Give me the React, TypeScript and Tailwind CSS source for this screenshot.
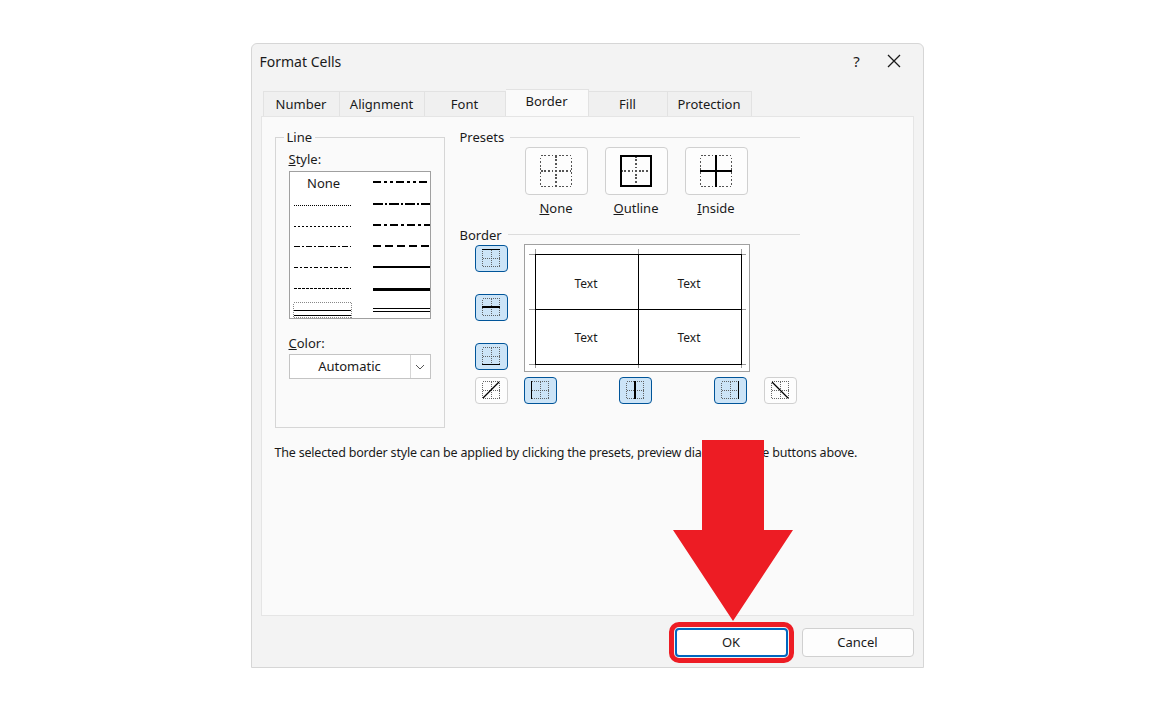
import React from 'react';

const font = { fontFamily: '"Noto Sans", "Open Sans", sans-serif' };

type IconProps = { top?: boolean; mid?: boolean; bottom?: boolean; left?: boolean; center?: boolean; right?: boolean; diagUp?: boolean; diagDown?: boolean; size?: number; w?: number };

// small border glyph: dotted grid with the solid edges picked by props
const BorderGlyph: React.FC<IconProps> = ({ top, mid, bottom, left, center, right, diagUp, diagDown, size = 20, w = 1.5 }) => (
    <svg width={size} height={size} viewBox="0 0 20 20" shapeRendering="crispEdges">
        <rect x="1.5" y="1.5" width="17" height="17" fill="none" stroke="#555" strokeDasharray="1 1" strokeWidth={w * 0.6} />
        <line x1="10" y1="1.5" x2="10" y2="18.5" stroke="#555" strokeDasharray="1 1" strokeWidth={w * 0.6} />
        <line x1="1.5" y1="10" x2="18.5" y2="10" stroke="#555" strokeDasharray="1 1" strokeWidth={w * 0.6} />
        {top && <line x1="1" y1="1.5" x2="19" y2="1.5" stroke="#000" strokeWidth={w} />}
        {mid && <line x1="1" y1="10" x2="19" y2="10" stroke="#000" strokeWidth={w} />}
        {bottom && <line x1="1" y1="18.5" x2="19" y2="18.5" stroke="#000" strokeWidth={w} />}
        {left && <line x1="1.5" y1="1" x2="1.5" y2="19" stroke="#000" strokeWidth={w} />}
        {center && <line x1="10" y1="1" x2="10" y2="19" stroke="#000" strokeWidth={w} />}
        {right && <line x1="18.5" y1="1" x2="18.5" y2="19" stroke="#000" strokeWidth={w} />}
        {diagUp && <line x1="2" y1="18" x2="18" y2="2" stroke="#000" strokeWidth="1.2" shapeRendering="auto" />}
        {diagDown && <line x1="2" y1="2" x2="18" y2="18" stroke="#000" strokeWidth="1.2" shapeRendering="auto" />}
    </svg>
);

const SmallBtn: React.FC<{ on?: boolean; children: React.ReactNode }> = ({ on, children }) => (
    <div className={`w-[33px] h-[27px] rounded-[4px] border flex items-center justify-center ${on ? 'bg-[#cce4f7] border-[#005499]' : 'bg-[#fdfdfd] border-[#d0d0d0]'}`}>
        {children}
    </div>
);

const PresetBtn: React.FC<{ u: string; rest: string; children: React.ReactNode }> = ({ u, rest, children }) => (
    <div className="flex flex-col items-center w-[63px]">
        <div className="w-[63px] h-[48px] rounded-[4px] border border-[#d0d0d0] bg-[#fdfdfd] flex items-center justify-center">{children}</div>
        <div className="mt-[4px] text-[13px] text-[#1a1a1a]"><span className="underline">{u}</span>{rest}</div>
    </div>
);

const Header: React.FC<{ label: string }> = ({ label }) => (
    <div className="flex items-center gap-[6px] text-[13px] text-[#1a1a1a] leading-[18px]">
        <span>{label}</span>
        <div className="flex-1 h-px bg-[#dcdcdc]" />
    </div>
);

const StyleList = () => (
    <svg width="140" height="146" viewBox="0 0 140 146" shapeRendering="crispEdges">
        <text x="16" y="15" fontSize="13" fill="#1a1a1a" style={font}>None</text>
        <line x1="3" y1="32" x2="60" y2="32" stroke="#000" strokeDasharray="1 1" />
        <line x1="3" y1="53" x2="60" y2="53" stroke="#000" strokeDasharray="2 2" />
        <line x1="3" y1="73" x2="60" y2="73" stroke="#000" strokeDasharray="6 2 2 2" />
        <line x1="3" y1="94" x2="60" y2="94" stroke="#000" strokeDasharray="4 2 2 2" />
        <line x1="3" y1="115" x2="60" y2="115" stroke="#000" strokeDasharray="3 1" />
        <rect x="2.5" y="129.5" width="58" height="15" fill="none" stroke="#888" strokeDasharray="1 1" />
        <line x1="3" y1="137" x2="60" y2="137" stroke="#000" />
        <line x1="3" y1="142" x2="60" y2="142" stroke="#000" />
        <line x1="82" y1="9" x2="139" y2="9" stroke="#000" strokeWidth="2" strokeDasharray="8 3 3 3 3 3" />
        <line x1="82" y1="31" x2="139" y2="31" stroke="#000" strokeWidth="2" strokeDasharray="10 2 2 2" />
        <line x1="82" y1="52" x2="139" y2="52" stroke="#000" strokeWidth="2" strokeDasharray="8 3 3 3" />
        <line x1="82" y1="73" x2="139" y2="73" stroke="#000" strokeWidth="2" strokeDasharray="8 4" />
        <line x1="82" y1="94" x2="139" y2="94" stroke="#000" strokeWidth="2" />
        <line x1="82" y1="116" x2="139" y2="116" stroke="#000" strokeWidth="3" />
        <line x1="82" y1="135" x2="139" y2="135" stroke="#000" />
        <line x1="82" y1="138" x2="139" y2="138" stroke="#000" />
    </svg>
);

const Preview = () => (
    <svg width="225" height="127" viewBox="0 0 225 127" shapeRendering="crispEdges" style={font}>
        <g stroke="#999">
            <line x1="10" y1="4" x2="10" y2="13" /><line x1="216" y1="4" x2="216" y2="13" /><line x1="113" y1="4" x2="113" y2="13" />
            <line x1="10" y1="114" x2="10" y2="123" /><line x1="216" y1="114" x2="216" y2="123" /><line x1="113" y1="114" x2="113" y2="123" />
            <line x1="4" y1="9" x2="13" y2="9" /><line x1="212" y1="9" x2="221" y2="9" />
            <line x1="4" y1="64" x2="13" y2="64" /><line x1="212" y1="64" x2="221" y2="64" />
            <line x1="4" y1="119" x2="13" y2="119" /><line x1="212" y1="119" x2="221" y2="119" />
        </g>
        <rect x="10.5" y="9.5" width="206" height="110" fill="none" stroke="#000" />
        <line x1="113.5" y1="9" x2="113.5" y2="120" stroke="#000" />
        <line x1="10" y1="64.5" x2="217" y2="64.5" stroke="#000" />
        <g fontSize="12" fill="#1a1a1a" textAnchor="middle">
            <text x="61" y="43">Text</text><text x="164" y="43">Text</text>
            <text x="61" y="97">Text</text><text x="164" y="97">Text</text>
        </g>
    </svg>
);

const tabs = ['Number', 'Alignment', 'Font', 'Border', 'Fill', 'Protection'];
const tabW = [77, 85, 81, 83, 79, 84];

const App: React.FC = () => (
    <div className="relative w-[1174px] h-[713px] bg-white pt-[43px]" style={font}>
        <div className="mx-auto w-[673px] h-[625px] bg-[#f3f3f3] border border-[#d6d6d6] rounded-t-[6px] flex flex-col text-[#1a1a1a]">
            <div className="h-[34px] flex items-center pl-[8px]">
                <span className="text-[14px] flex-1">Format Cells</span>
                <span className="text-[15px] w-[60px] text-center">?</span>
                <svg width="14" height="14" viewBox="0 0 14 14" className="mr-[22px]"><path d="M1 1L13 13M13 1L1 13" stroke="#1a1a1a" strokeWidth="1.3" /></svg>
            </div>
            <div className="flex items-end h-[38px] pl-[11px]">
                {tabs.map((t, i) => (
                    <div key={t} style={{ width: tabW[i] }}
                        className={`flex items-center justify-center text-[13px] border-t border-r border-[#e2e2e2] ${t === 'Border' ? 'h-[27px] bg-[#fafafa] pb-[2px]' : 'h-[25px] bg-[#f0f0f0] pt-[1px]'} ${i === 0 ? 'border-l' : ''}`}>
                        {t}
                    </div>
                ))}
            </div>
            <div className="mx-[9px] h-[500px] bg-[#fafafa] border border-[#e5e5e5] flex flex-col px-[13px] pt-[11px]">
                <div className="flex">
                    <fieldset className="w-[169px] h-[300px] border border-[#d6d6d6] px-[13px] pt-[4px]">
                        <legend className="text-[13px] ml-[-5px] px-[3px] leading-[18px]">Line</legend>
                        <div className="text-[13px] leading-[18px]"><span className="underline">S</span>tyle:</div>
                        <div className="mt-[3px] w-[142px] h-[148px] border border-[#a0a0a0] bg-white p-px"><StyleList /></div>
                        <div className="text-[13px] mt-[15px] leading-[18px]"><span className="underline">C</span>olor:</div>
                        <div className="mt-[2px] w-[142px] h-[25px] border border-[#c4c4c4] bg-white flex">
                            <div className="flex-1 flex items-center justify-center text-[13px]">Automatic</div>
                            <div className="w-[20px] border-l border-[#d6d6d6] flex items-center justify-center">
                                <svg width="10" height="6" viewBox="0 0 10 6"><path d="M1 1l4 4 4-4" stroke="#555" fill="none" /></svg>
                            </div>
                        </div>
                    </fieldset>
                    <div className="ml-[15px] w-[340px]">
                        <Header label="Presets" />
                        <div className="flex gap-[17px] ml-[65px] mt-[1px]">
                            <PresetBtn u="N" rest="one"><BorderGlyph size={36} w={1} /></PresetBtn>
                            <PresetBtn u="O" rest="utline"><BorderGlyph size={36} w={1} top bottom left right /></PresetBtn>
                            <PresetBtn u="I" rest="nside"><BorderGlyph size={36} w={1} mid center /></PresetBtn>
                        </div>
                        <div className="mt-[7px]"><Header label="Border" /></div>
                        <div className="flex mt-[0px] ml-[15px]">
                            <div className="flex flex-col gap-[22px] pt-px">
                                <SmallBtn on><BorderGlyph top /></SmallBtn>
                                <SmallBtn on><BorderGlyph mid /></SmallBtn>
                                <SmallBtn on><BorderGlyph bottom /></SmallBtn>
                            </div>
                            <div className="ml-[16px] w-[226px] h-[128px] border border-[#a0a0a0] bg-white"><Preview /></div>
                        </div>
                        <div className="flex items-center mt-[5px] ml-[15px]">
                            <SmallBtn><BorderGlyph diagUp /></SmallBtn>
                            <div className="ml-[16px]"><SmallBtn on><BorderGlyph left /></SmallBtn></div>
                            <div className="ml-[62px]"><SmallBtn on><BorderGlyph center /></SmallBtn></div>
                            <div className="ml-[62px]"><SmallBtn on><BorderGlyph right /></SmallBtn></div>
                            <div className="ml-[17px]"><SmallBtn><BorderGlyph diagDown /></SmallBtn></div>
                        </div>
                    </div>
                </div>
                <p className="mt-[16px] text-[12.5px] whitespace-nowrap tracking-[-0.2px]">The selected border style can be applied by clicking the presets, preview diagram or the buttons above.</p>
            </div>
            <div className="flex justify-end gap-[14px] pr-[9px] pt-[12px]">
                <div className="w-[113px] h-[29px] rounded-[4px] border-2 border-[#0067c0] bg-white flex items-center justify-center text-[13px] outline-[5px] outline-solid outline-[#ed1c24] outline-offset-[1px]">OK</div>
                <div className="w-[112px] h-[29px] rounded-[4px] border border-[#d0d0d0] bg-[#fdfdfd] flex items-center justify-center text-[13px]">Cancel</div>
            </div>
        </div>
        <svg className="absolute left-[672px] top-[440px]" width="122" height="182" viewBox="0 0 122 182">
            <path d="M30 0H92V90H121L61 181L1 90H30Z" fill="#ed1c24" />
        </svg>
    </div>
);

export default App;
